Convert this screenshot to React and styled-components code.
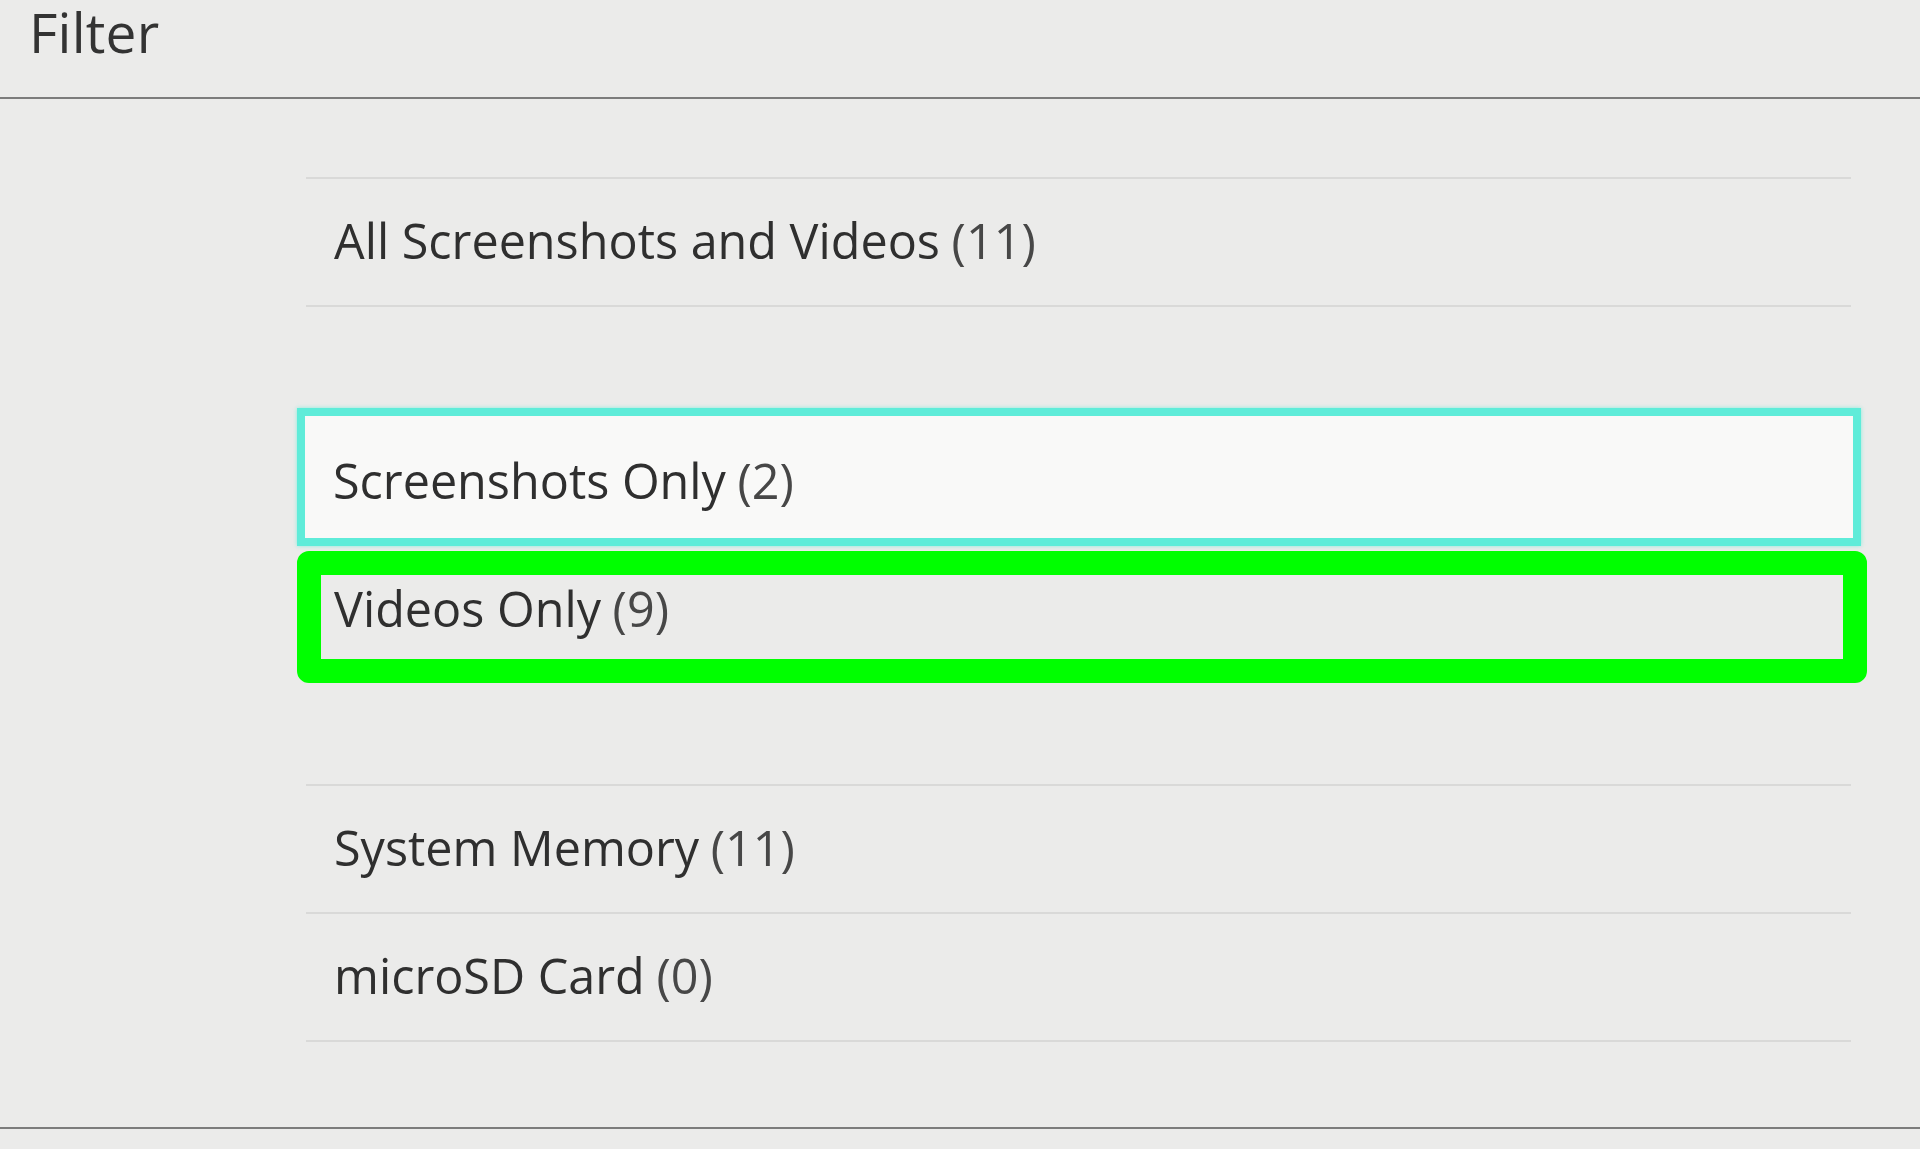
import React from "react";
import styled, { createGlobalStyle } from "styled-components";

const Global = createGlobalStyle`
  html, body { margin: 0; padding: 0; background: #ebebea; }
  body { font-family: "Open Sans", "Noto Sans", sans-serif; }
`;

const Screen = styled.div`
  height: 100vh;
  display: flex;
  flex-direction: column;
  background: #ebebea;
  color: #2f2f2f;
  overflow: hidden;
`;

const Header = styled.header`
  height: 97px;
  flex: none;
  display: flex;
  align-items: flex-start;
  padding-left: 29px;
  border-bottom: 2px solid #7c7c7c;
`;

const Title = styled.h1`
  margin: 4px 0 0;
  font-weight: 400;
  font-size: 55px;
  line-height: 55px;
  color: #333;
  letter-spacing: 0.2px;
`;

const Main = styled.main`
  flex: 1;
  display: flex;
  flex-direction: column;
  padding: 78px 69px 0 306px;
`;

const Section = styled.section`
  display: flex;
  flex-direction: column;
  margin-top: ${(p) => p.$gap || 0}px;
  border-top: ${(p) => (p.$lined ? "2px solid #d9d9d8" : "none")};
`;

const Row = styled.div`
  position: relative;
  height: ${(p) => (p.$lined ? 126 : 128)}px;
  box-sizing: content-box;
  display: flex;
  align-items: center;
  padding-left: 28px;
  padding-bottom: 0;
  font-size: 48.5px;
  line-height: 1;
  border-bottom: ${(p) => (p.$lined ? "2px solid #d9d9d8" : "none")};
`;

const TextBox = styled.span`
  display: flex;
  align-items: baseline;
  margin-top: ${(p) => p.$shift || 0}px;
`;

const FocusRow = styled(Row)`
  height: 138px;
  box-sizing: border-box;
  margin: 0 -10px 0 -9px;
  padding-left: 28px;
  background: #f9f9f8;
  border: 8px solid #5fecd9;
  box-shadow: 0 0 4px rgba(95, 236, 217, 0.7);
`;

const MarkedRow = styled(Row)`
  &::after {
    content: "";
    position: absolute;
    top: 5px;
    left: -9px;
    right: -16px;
    bottom: -9px;
    border: 24px solid #00ff00;
    border-radius: 12px;
    pointer-events: none;
  }
`;

const Label = styled.span`
  color: #2f2f2f;
`;

const Count = styled.span`
  color: #474747;
  margin-left: 0.24em;
`;

const Footer = styled.footer`
  height: 20px;
  flex: none;
  border-top: 2px solid #7c7c7c;
`;

const Item = ({ as: C = Row, label, count, lined, shift = -4 }) => (
  <C $lined={lined}>
    <TextBox $shift={shift}>
      <Label>{label}</Label>
      <Count>({count})</Count>
    </TextBox>
  </C>
);

export default function App() {
  return (
    <Screen>
      <Global />
      <Header>
        <Title>Filter</Title>
      </Header>
      <Main>
        <Section $lined>
          <Item label="All Screenshots and Videos" count={11} lined />
        </Section>
        <Section $gap={101}>
          <Item as={FocusRow} label="Screenshots Only" count={2} shift={6} />
          <Item as={MarkedRow} label="Videos Only" count={9} />
        </Section>
        <Section $lined $gap={110}>
          <Item label="System Memory" count={11} lined />
          <Item label="microSD Card" count={0} lined />
        </Section>
      </Main>
      <Footer />
    </Screen>
  );
}
